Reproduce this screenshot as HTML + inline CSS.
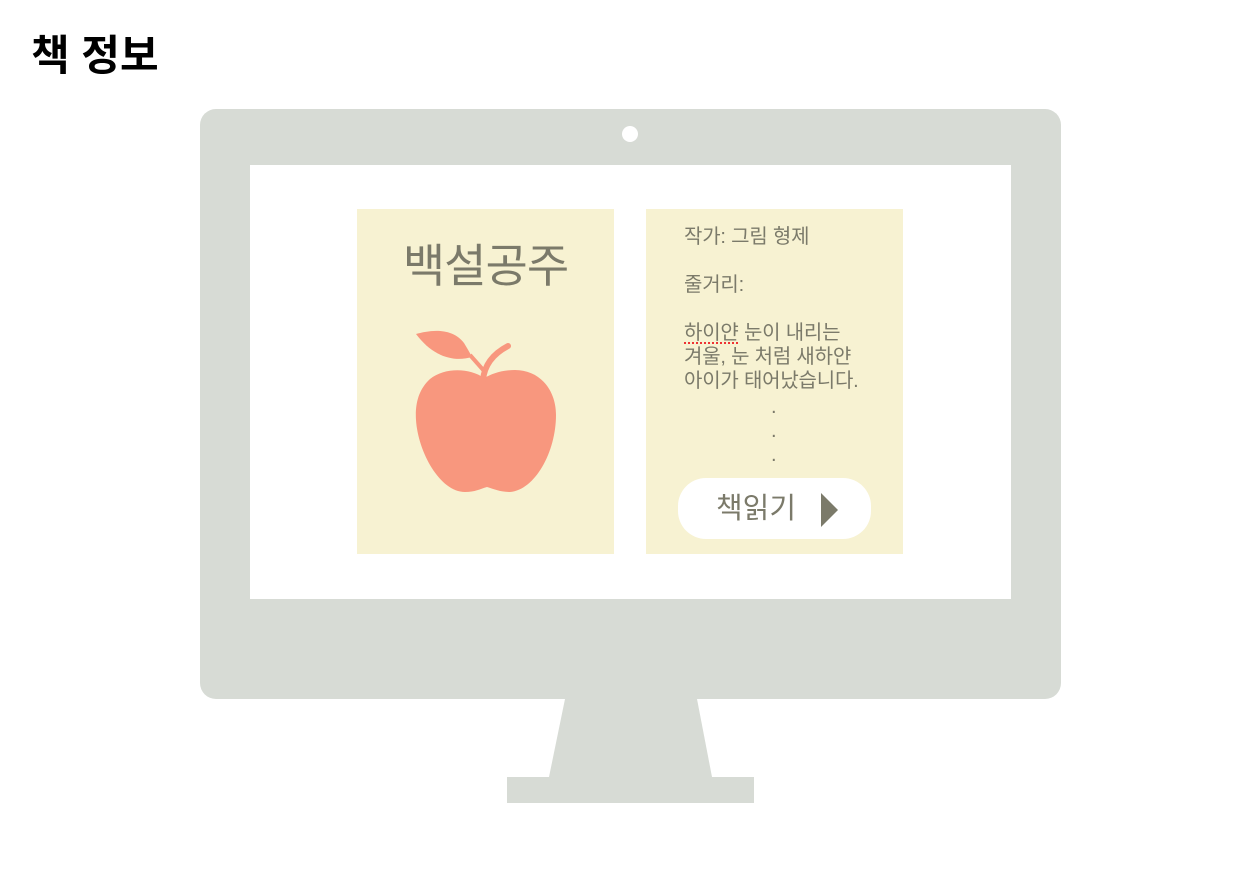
<!DOCTYPE html>
<html><head><meta charset="utf-8"><style>
body{margin:0;width:1256px;height:884px;background:#fff;position:relative;overflow:hidden;font-family:"Liberation Sans","Noto Sans CJK KR",sans-serif}
.a{position:absolute}
h1{position:absolute;left:31px;top:29px;margin:0;font-size:42px;font-weight:bold;color:#000;line-height:54px;font-family:"Liberation Sans","Noto Sans CJK KR",sans-serif}
.t{color:#7b7a6a;font-size:20px;line-height:24px;letter-spacing:-0.2px}
</style></head><body>
<h1>책 정보</h1>
<div class="a" style="left:200px;top:109px;width:861px;height:590px;background:#d7dbd5;border-radius:16px"></div>
<div class="a" style="left:622px;top:126px;width:16px;height:16px;border-radius:50%;background:#fff"></div>
<div class="a" style="left:250px;top:165px;width:761px;height:434px;background:#fff"></div>
<svg class="a" style="left:0;top:0" width="1256" height="884">
<polygon points="565,699 697,699 712,777 549,777" fill="#d7dbd5"/>
<rect x="507" y="777" width="247" height="26" fill="#d7dbd5"/>
<rect x="357" y="209" width="257" height="345" fill="#f7f2d2"/>
<rect x="646" y="209" width="257" height="345" fill="#f7f2d2"/>
<path d="M484,378 C470,368 445,367 430,379 C418,390 415,405 416,420 C418,452 440,492 465,492 C475,492 480,489 487,487 C494,489 500,492 510,492 C535,490 556,452 556,415 C556,390 540,370 515,370 C500,370 492,374 484,378 Z" fill="#f8977e"/>
<path d="M483,380 Q485,358 508,346" stroke="#f8977e" stroke-width="6" fill="none" stroke-linecap="round"/>
<path d="M416,334 C430,330 452,327 464,343 C467,348 470,353 472,357 C455,362 434,358 416,334 Z" fill="#f8977e"/>
<path d="M470,355 L485,372" stroke="#f8977e" stroke-width="4"/>
<rect x="678" y="478" width="193" height="61" rx="28" fill="#fff"/>
<polygon points="821,493 838,510 821,527" fill="#7b7a6a"/>
</svg>
<div class="a" style="left:357px;top:237px;width:257px;text-align:center;font-size:46px;line-height:58px;color:#7b7a6a;letter-spacing:-1px">백설공주</div>
<div class="a t" style="left:684px;top:225px">작가: 그림 형제</div>
<div class="a t" style="left:684px;top:273px">줄거리:</div>
<div class="a t" style="left:684px;top:321px"><span style="text-decoration:underline dotted #e33;text-underline-offset:3px">하이얀</span> 눈이 내리는<br>겨울, 눈 처럼 새하얀<br>아이가 태어났습니다.</div>
<div class="a t" style="left:771px;top:395px;line-height:24px">.<br>.<br>.</div>
<div class="a" style="left:716px;top:490px;font-size:29px;line-height:38px;color:#7b7a6a">책읽기</div>
</body></html>
